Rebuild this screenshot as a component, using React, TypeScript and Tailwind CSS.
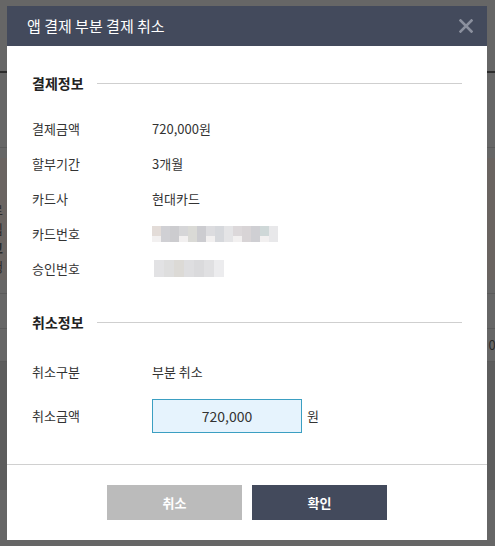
import React from "react";

const font = { fontFamily: '"Noto Sans CJK KR", "Noto Sans", sans-serif' };

function Row({ label, children }: { label: string; children?: React.ReactNode }) {
  return (
    <div className="flex h-[35px] items-center text-[13px] text-[#333]">
      <div className="w-[120px] shrink-0">{label}</div>
      <div className="flex items-center">{children}</div>
    </div>
  );
}

function Heading({ title }: { title: string }) {
  return (
    <div className="flex h-5 items-center">
      <span className="text-[14px] font-bold text-[#222]">{title}</span>
      <div className="ml-[13px] h-px flex-1 bg-[#cfcfcf]" />
    </div>
  );
}

export default function App() {
  const card = ["#e3dcd8", "#d0d0d4", "#cccccf", "#d6d6d8", "#dadad6", "#ccccd0", "#dcdcdf", "#d6d8dc", "#e4e4e6", "#dcd8da", "#d8d4d6", "#cfcfd3", "#cfd8d8", "#e8e8ea"];
  const appr = ["#e2e2e4", "#dedede", "#dcdad6", "#dedee0", "#dadadc", "#e0e0e2", "#ececee"];
  return (
    <div className="relative h-[546px] w-[495px] overflow-hidden bg-[#666666]" style={font}>
      {/* dimmed background page */}
      <div className="flex h-full flex-col">
        <div className="h-[71px]" />
        <div className="h-[2px] bg-[#2c2c2c]" />
        <div className="h-[74px]" />
        <div className="h-px bg-[#5a5a5a]" />
        <div className="h-[10px]" />
        <div className="flex h-[122px] flex-col justify-end bg-[#6a6461] pb-[4px] text-[13px] leading-[19px] text-[#2a2a2a]">
          <span className="-ml-[9px]">로</span>
          <span className="-ml-[9px]">입</span>
          <span className="-ml-[9px] font-bold">고</span>
          <span className="-ml-[9px]">행</span>
        </div>
        <div className="h-[13px]" />
        <div className="h-px bg-[#5a5a5a]" />
        <div className="h-[34px]" />
        <div className="h-px bg-[#5a5a5a]" />
        <div className="flex h-[32px] items-center justify-end text-[13px] text-[#2a2a2a]">
          <span className="-mr-[8px]">00</span>
        </div>
        <div className="h-px bg-[#5a5a5a]" />
        <div className="flex h-[128px] items-end bg-[#5d5d5d] pb-[6px]" />
        <div className="flex-1" />
      </div>

      {/* modal */}
      <div className="absolute left-[7px] top-[6px] flex h-[534px] w-[480px] flex-col bg-white">
        <div className="flex h-[40px] items-center justify-between bg-[#434a5c] pl-[20px] pr-[14px]">
          <span className="text-[15px] text-white">앱 결제 부분 결제 취소</span>
          <svg width="14" height="14" viewBox="0 0 14 14">
            <path d="M1.5 1.5 L12.5 12.5 M12.5 1.5 L1.5 12.5" stroke="#8b909e" strokeWidth="2.6" strokeLinecap="square" />
          </svg>
        </div>

        <div className="flex flex-col px-[25px] pt-[27px] pb-[31px]">
          <Heading title="결제정보" />
          <div className="mt-[18px] flex flex-col">
            <Row label="결제금액">720,000원</Row>
            <Row label="할부기간">3개월</Row>
            <Row label="카드사">현대카드</Row>
            <Row label="카드번호">
              <div className="flex flex-col">
                <div className="flex h-[10px]">
                  {card.map((c, i) => (
                    <div key={i} className="h-full w-[9px]" style={{ background: c }} />
                  ))}
                </div>
                <div className="flex h-[6px]">
                  {card.map((c, i) => (
                    <div key={i} className="h-full w-[9px]" style={{ background: i % 3 === 0 ? "#f2f0f0" : c }} />
                  ))}
                </div>
              </div>
            </Row>
            <Row label="승인번호">
              <div className="ml-[2px] flex h-[17px]">
                {appr.map((c, i) => (
                  <div key={i} className="h-full w-[10px]" style={{ background: c }} />
                ))}
              </div>
            </Row>
          </div>

          <div className="mt-[26px]">
            <Heading title="취소정보" />
          </div>
          <div className="mt-[23px] flex h-[34px] items-center text-[13px] text-[#333]">
            <div className="w-[120px]">취소구분</div>
            <div>부분 취소</div>
          </div>
          <div className="mt-[10px] flex h-[34px] items-center text-[13px] text-[#333]">
            <div className="w-[120px]">취소금액</div>
            <div className="flex h-[34px] w-[150px] items-center justify-center border border-[#3b9fc2] bg-[#e6f3fd] text-[14px] text-[#333]">
              720,000
            </div>
            <span className="ml-[5px]">원</span>
          </div>
        </div>

        <div className="h-px bg-[#d0d0d0]" />
        <div className="flex justify-center gap-[10px] pt-[20px]">
          <button className="h-[35px] w-[135px] bg-[#bbbbbb] text-[13px] font-bold text-white">취소</button>
          <button className="h-[35px] w-[135px] bg-[#434a5c] text-[13px] font-bold text-white">확인</button>
        </div>
      </div>
    </div>
  );
}
